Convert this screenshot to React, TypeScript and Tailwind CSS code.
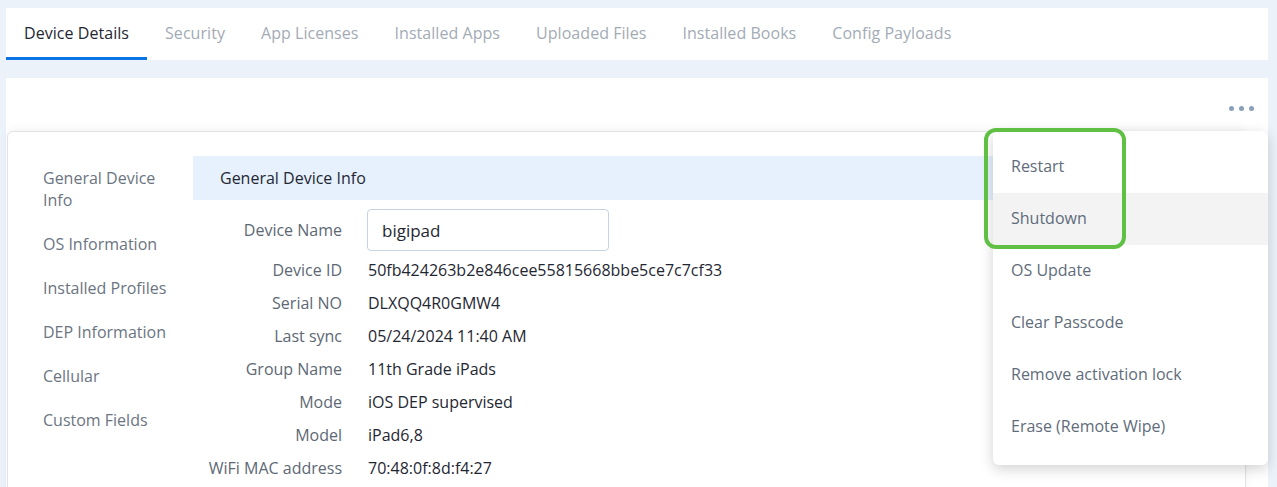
import React from "react";

const tabs = [
  "Device Details",
  "Security",
  "App Licenses",
  "Installed Apps",
  "Uploaded Files",
  "Installed Books",
  "Config Payloads",
];

const navItems = [
  "General Device Info",
  "OS Information",
  "Installed Profiles",
  "DEP Information",
  "Cellular",
  "Custom Fields",
];

const rows: [string, string][] = [
  ["Device ID", "50fb424263b2e846cee55815668bbe5ce7c7cf33"],
  ["Serial NO", "DLXQQ4R0GMW4"],
  ["Last sync", "05/24/2024 11:40 AM"],
  ["Group Name", "11th Grade iPads"],
  ["Mode", "iOS DEP supervised"],
  ["Model", "iPad6,8"],
  ["WiFi MAC address", "70:48:0f:8d:f4:27"],
];

const actions = [
  "Restart",
  "Shutdown",
  "OS Update",
  "Clear Passcode",
  "Remove activation lock",
  "Erase (Remote Wipe)",
];

export default function App() {
  return (
    <div className="h-[487px] overflow-hidden bg-[#ebf2fa] pl-[6px] pr-[9px] pt-2 font-['Open_Sans',sans-serif] text-[16px]">
      {/* tabs */}
      <div className="flex h-[52px] bg-white">
        {tabs.map((t, i) => (
          <div
            key={t}
            className={
              i === 0
                ? "flex items-center border-b-[3px] border-[#0b74e5] px-[18px] tracking-[0.05px] text-[#1f2733]"
                : "flex items-center border-b-[3px] border-transparent px-[18px] tracking-[0.05px] text-[#a3abb5]"
            }
          >
            {t}
          </div>
        ))}
      </div>

      <div className="relative mt-[18px] h-[500px] bg-white">
        <div className="flex h-[53px] items-start justify-end gap-[5px] pr-[14px] pt-[28px]">
          <span className="h-[5px] w-[5px] rounded-full bg-[#8a9fba]" />
          <span className="h-[5px] w-[5px] rounded-full bg-[#8a9fba]" />
          <span className="h-[5px] w-[5px] rounded-full bg-[#8a9fba]" />
        </div>

        {/* card */}
        <div className="ml-px mr-[22px] flex min-h-[420px] rounded-md border border-[#e1e3e6] pl-[35px] pt-[24px] shadow-[0_-2px_10px_rgba(0,0,0,0.05)]">
          <div className="w-[150px] shrink-0 pr-[20px]">
            {navItems.map((n) => (
              <div key={n} className="py-[11px] leading-[22px] text-[#6b7582]">
                {n}
              </div>
            ))}
          </div>

          <div className="flex-1">
            <div className="flex h-[44px] items-center bg-[#e6f1fd] px-[27px] font-medium text-[#1f2733]">
              General Device Info
            </div>

            <div className="mt-[9px] flex h-[42px] items-center">
              <div className="w-[149px] text-right text-[#5d6875]">Device Name</div>
              <input
                readOnly
                value="bigipad"
                className="ml-[25px] h-[42px] w-[242px] rounded-[4px] border border-[#c5d3e3] px-[14px] text-[17px] text-[#1f2733] outline-none"
              />
            </div>

            <div className="mt-[2px]">
              {rows.map(([label, value]) => (
                <div key={label} className="flex h-[33px] items-center">
                  <div className="w-[149px] text-right text-[#5d6875]">{label}</div>
                  <div className="ml-[26px] text-[#1f2733]">{value}</div>
                </div>
              ))}
            </div>
          </div>
        </div>

        {/* actions menu */}
        <div className="absolute right-0 top-[53px] w-[275px] rounded-md bg-white pb-[12px] pt-[10px] shadow-[0_4px_14px_rgba(0,0,0,0.18)]">
          {actions.map((a, i) => (
            <div
              key={a}
              className={
                i === 1
                  ? "flex h-[52px] items-center bg-[#f3f3f4] px-[18px] pb-[2px] text-[#5f6c7b]"
                  : "flex h-[52px] items-center px-[18px] pb-[2px] text-[#5f6c7b]"
              }
            >
              {a}
            </div>
          ))}
          <div className="absolute left-[-9px] top-[-3px] h-[121px] w-[142px] rounded-[12px] border-4 border-[#5fc043]" />
        </div>
      </div>
    </div>
  );
}
